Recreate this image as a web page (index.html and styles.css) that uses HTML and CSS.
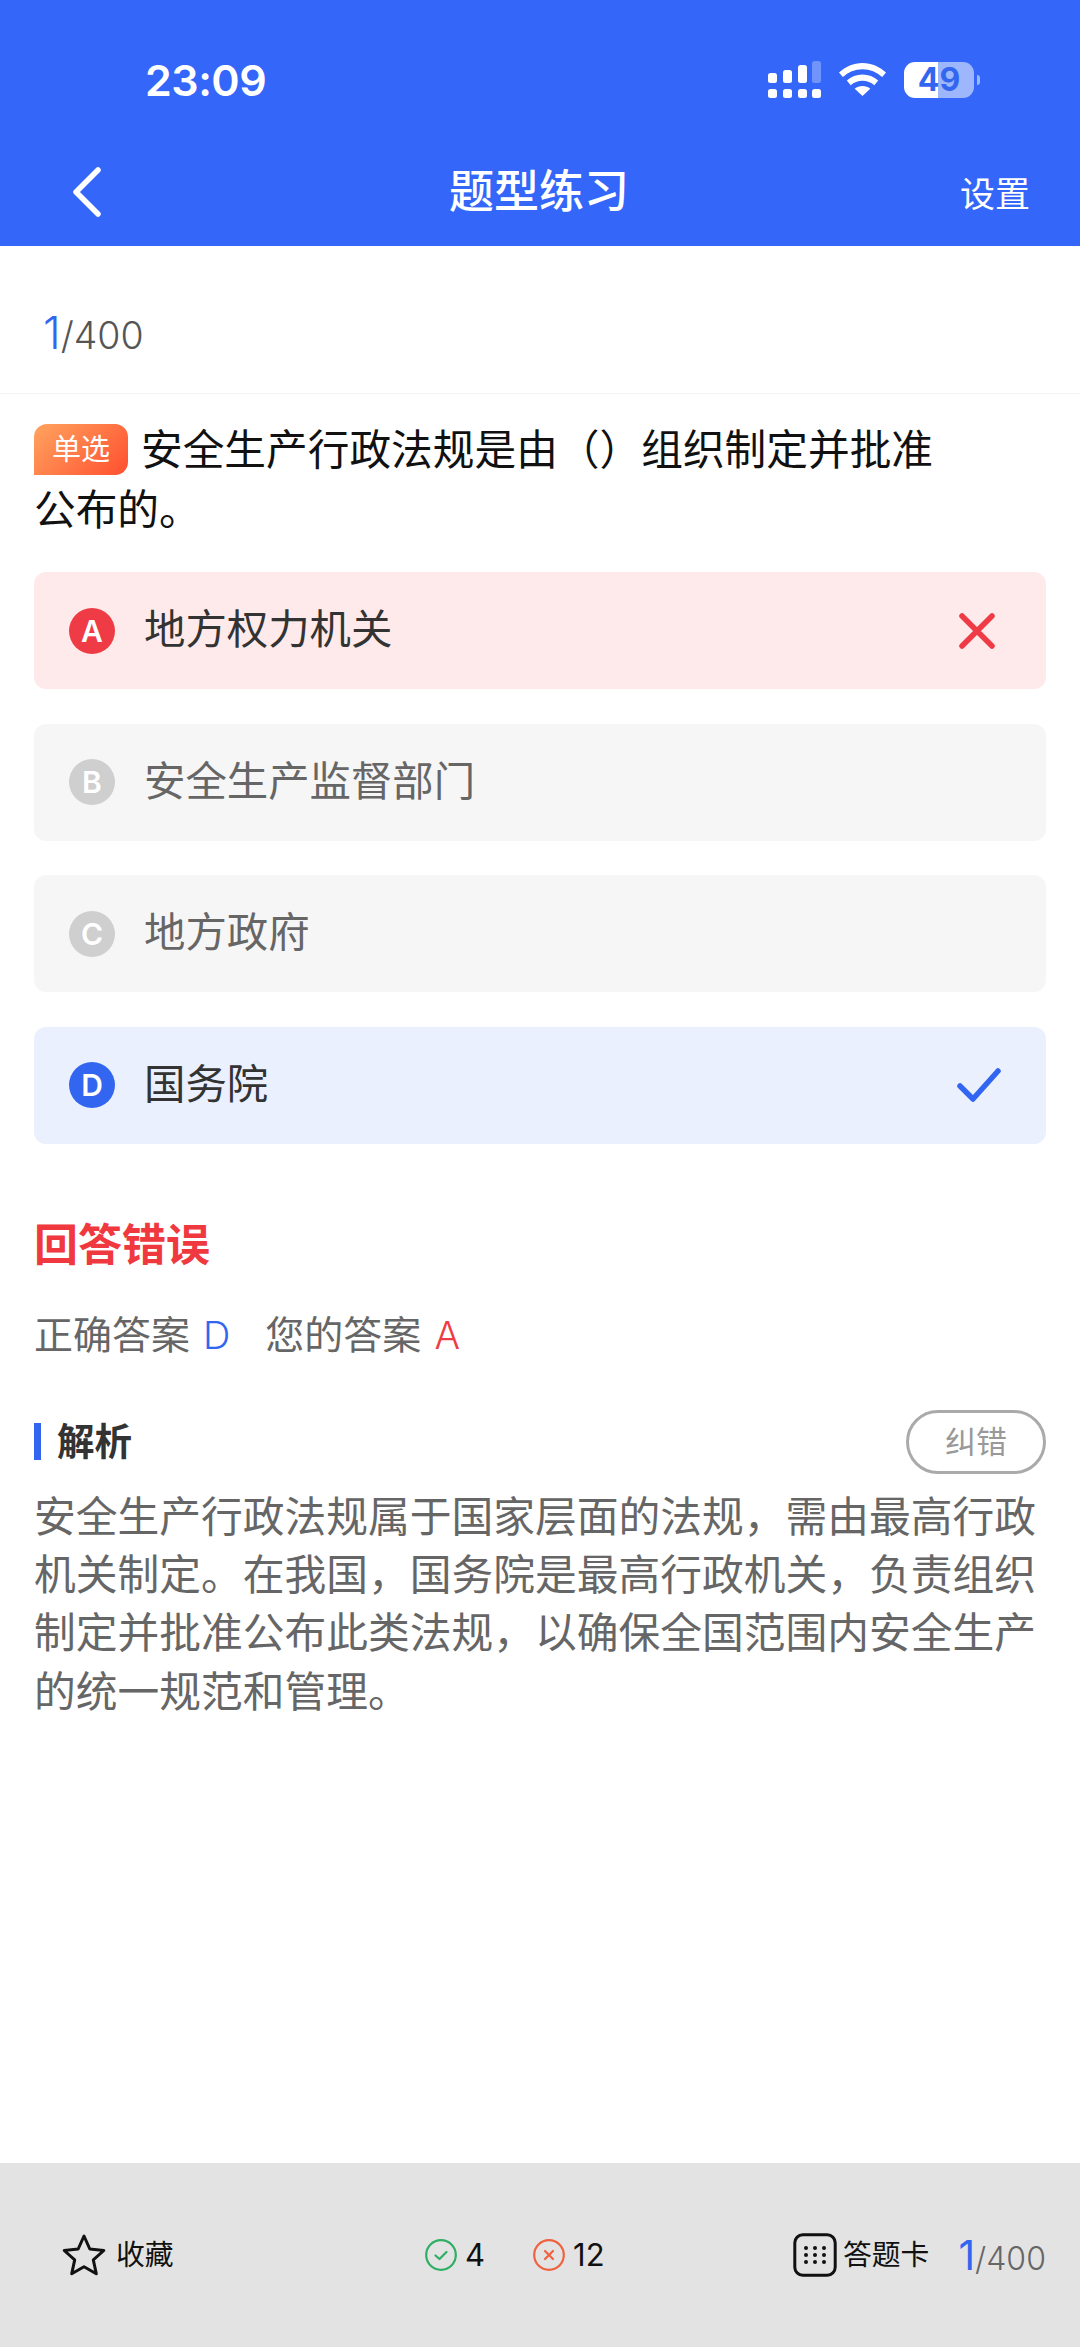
FILE: index.html
```html
<!DOCTYPE html>
<html lang="zh-CN">
<head>
<meta charset="utf-8">
<title>题型练习</title>
<link rel="stylesheet" href="styles.css">
</head>
<body>
<div class="page">
  <header class="header">
    <div class="status">
      <span class="time">23:09</span>
      <div class="status-icons">
        <svg class="signal" width="53" height="37" viewBox="0 0 53 37" fill="#fff">
          <rect x="0" y="28" width="9" height="9" rx="2.5"/><rect x="15" y="28" width="9" height="9" rx="2.5"/><rect x="30" y="28" width="9" height="9" rx="2.5"/><rect x="44" y="28" width="9" height="9" rx="2.5"/>
          <rect x="0" y="12" width="9" height="10" rx="2.5"/><rect x="15" y="9" width="9" height="13" rx="2.5"/><rect x="30" y="4" width="9" height="18" rx="2.5"/><rect x="44" y="0" width="9" height="22" rx="2.5" fill-opacity=".3"/>
        </svg>
        <svg class="wifi" width="47" height="33" viewBox="0 0 47 33" fill="#fff">
          <path d="M23.5 0C14.5 0 6.5 3.6 0 9.5l3.8 4.6C9.2 9.2 16 6.2 23.5 6.2s14.3 3 19.7 7.9L47 9.5C40.500 3.600 32.500 0 23.500 0z"/>
          <path d="M23.500 11.500c-6 0-11.400 2.300-15.700 6.100l3.900 4.700c3.200-2.800 7.300-4.500 11.800-4.500s8.600 1.700 11.800 4.500l3.900-4.700c-4.300-3.800-9.700-6.100-15.700-6.100z"/>
          <path d="M23.500 23c-3 0-5.700 1-7.800 2.800l7.800 7.200 7.800-7.200C29.200 24 26.500 23 23.500 23z"/>
        </svg>
        <div class="battery"><span class="battery-num">49</span></div>
        <span class="battery-nub"></span>
      </div>
    </div>
    <nav class="nav">
      <svg class="back" width="30" height="50" viewBox="0 0 30 50" fill="none" stroke="#fff" stroke-width="5.500" stroke-linecap="round" stroke-linejoin="round">
        <path d="M26 3 4 25l22 22"/>
      </svg>
      <h1 class="title">题型练习</h1>
      <span class="settings">设置</span>
    </nav>
  </header>

  <main class="main">
    <div class="progress"><span class="cur">1</span><span class="total">/400</span></div>

    <section class="content">
      <p class="question"><span class="tag">单选</span>安全生产行政法规是由（）组织制定并批准<br>公布的。</p>

      <div class="options">
        <div class="option wrong">
          <span class="letter">A</span><span class="opt-text">地方权力机关</span>
          <svg class="mark" width="36" height="36" viewBox="0 0 36 36" fill="none" stroke="#EE3B45" stroke-width="5.500" stroke-linecap="round"><path d="M3 3l30 30M33 3 3 33"/></svg>
        </div>
        <div class="option muted"><span class="letter">B</span><span class="opt-text">安全生产监督部门</span></div>
        <div class="option muted"><span class="letter">C</span><span class="opt-text">地方政府</span></div>
        <div class="option right">
          <span class="letter">D</span><span class="opt-text">国务院</span>
          <svg class="mark" width="44" height="36" viewBox="0 0 44 36" fill="none" stroke="#3366F0" stroke-width="5.500" stroke-linecap="round" stroke-linejoin="round"><path d="M3 19l13 13L41 4"/></svg>
        </div>
      </div>

      <h2 class="result">回答错误</h2>
      <p class="answers">正确答案<span class="ans blue">D</span><span class="yours">您的答案</span><span class="ans red">A</span></p>

      <div class="analysis-head">
        <h3 class="analysis-title">解析</h3>
        <span class="report">纠错</span>
      </div>
      <p class="analysis">安全生产行政法规属于国家层面的法规，需由最高行政机关制定。在我国，国务院是最高行政机关，负责组织制定并批准公布此类法规，以确保全国范围内安全生产的统一规范和管理。</p>
    </section>
  </main>

  <footer class="bar">
    <div class="group fav">
      <svg width="44" height="44" viewBox="0 0 44 44" fill="none" stroke="#111" stroke-width="3" stroke-linejoin="round"><path d="M22 3l5.800 13 14 1.500-10.500 9.400 3 13.900L22 33.700 9.700 40.800l3-13.900L2.200 17.500l14-1.500z"/></svg>
      <span class="bar-text">收藏</span>
    </div>
    <div class="group stats">
      <svg width="32" height="32" viewBox="0 0 32 32" fill="none" stroke="#2FAE64" stroke-width="2.200" stroke-linecap="round" stroke-linejoin="round"><circle cx="16" cy="16" r="14.800"/><path d="M10.500 16.500l4 3.500 7-7"/></svg>
      <span class="num">4</span>
      <svg class="stat-x" width="32" height="32" viewBox="0 0 32 32" fill="none" stroke="#F0623F" stroke-width="2.200" stroke-linecap="round"><circle cx="16" cy="16" r="14.800"/><path d="M12 12l8 8M20 12l-8 8"/></svg>
      <span class="num">12</span>
    </div>
    <div class="group card">
      <svg width="44" height="44" viewBox="0 0 44 44" fill="none"><rect x="1.800" y="1.800" width="40.400" height="40.400" rx="8" stroke="#111" stroke-width="3"/><g fill="#111"><circle cx="13" cy="15" r="2"/><circle cx="22" cy="15" r="2"/><circle cx="31" cy="15" r="2"/><circle cx="13" cy="22" r="2"/><circle cx="22" cy="22" r="2"/><circle cx="31" cy="22" r="2"/><circle cx="13" cy="29" r="2"/><circle cx="22" cy="29" r="2"/><circle cx="31" cy="29" r="2"/></g></svg>
      <span class="bar-text">答题卡</span>
      <span class="bar-progress"><span class="bar-cur">1</span><span class="bar-total">/400</span></span>
    </div>
  </footer>
</div>
</body>
</html>
```
FILE: styles.css
```css
* { box-sizing: border-box; }
html, body { margin: 0; padding: 0; }
body {
  font-family: Inter, "Noto Sans CJK SC", sans-serif;
  background: #fff;
  color: #111;
}
h1, h2, h3, p { margin: 0; }
svg { flex: none; }
.page { width: 1080px; height: 2347px; display: flex; flex-direction: column; }

.header { height: 246px; background: #3366F9; color: #fff; flex: none; }
.status { height: 120px; padding: 40px 100px 0 145px; display: flex; align-items: center; justify-content: space-between; }
.time { font-size: 43px; font-weight: 600; line-height: 80px; letter-spacing: -.5px; }
.status-icons { display: flex; align-items: center; }
.signal { margin-top: -2px; }
.wifi { margin-left: 18px; margin-top: -2px; }
.battery {
  width: 70px; height: 36px; margin-left: 18px; border-radius: 11px;
  background: linear-gradient(90deg, #fff 0 34px, #9DB6FC 34px 100%);
  display: flex; align-items: center; justify-content: center;
}
.battery-num { font-size: 32px; font-weight: 700; color: #3366F0; line-height: 36px; }
.battery-nub { width: 3px; height: 10px; margin-left: 3px; border-radius: 0 3px 3px 0; background: #9DB6FC; }

.nav { height: 126px; padding: 17px 50px 0 72px; display: flex; align-items: center; justify-content: space-between; }
.title { flex: 1; text-align: center; font-size: 45px; font-weight: 500; line-height: 60px; margin-right: -16px; }
.settings { font-size: 35px; line-height: 48px; width: 70px; margin-top: 4px; }

.main { flex: 1; }
.progress { height: 148px; padding: 26px 0 0 43px; display: flex; align-items: baseline; border-bottom: 1px solid #F3F3F3; line-height: 121px; }
.cur { font-size: 45px; font-weight: 300; color: #3366F0; }
.total { font-size: 37.500px; font-weight: 300; color: #555; }

.content { padding: 26px 34px 0; }
.question { font-size: 41.700px; line-height: 60px; color: #111; height: 120px; }
.tag {
  display: inline-block; width: 94px; height: 51px; margin-right: 13px; vertical-align: 5px;
  border-radius: 13px 13px 13px 0;
  background: linear-gradient(135deg, #FFA45F, #FF4F2F);
  color: #fff; font-size: 29px; line-height: 51px; text-align: center;
}

.options { margin-top: 32px; display: flex; flex-direction: column; gap: 34.600px; }
.option { height: 117px; border-radius: 12px; padding: 0 35px; display: flex; align-items: center; font-size: 41.400px; }
.letter { width: 46px; height: 46px; border-radius: 50%; color: #fff; font-size: 30px; font-weight: 600; line-height: 46px; text-align: center; flex: none; }
.opt-text { margin-left: 29px; flex: 1; line-height: 60px; margin-top: -3px; }
.wrong { background: #FEEAEA; color: #333; padding-right: 51px; }
.wrong .letter { background: #EE3B45; }
.muted { background: #F6F6F6; color: #666; }
.muted .letter { background: #CFCFCF; }
.right { background: #EAF0FD; color: #333; padding-right: 45px; }
.right .letter { background: #3366F0; }

.result { margin-top: 71px; font-size: 44px; font-weight: 700; line-height: 60px; color: #F0393F; }
.answers { margin-top: 35px; font-size: 39px; line-height: 50px; color: #666; }
.ans { font-size: 38px; font-weight: 300; margin-left: 13px; }
.blue { color: #3366F0; }
.red { color: #EE3B45; }
.yours { margin-left: 35px; }

.analysis-head { margin-top: 50px; height: 64px; display: flex; align-items: center; justify-content: space-between; }
.analysis-title { border-left: 7px solid #3366F0; padding-left: 16px; font-size: 37.500px; font-weight: 700; line-height: 37px; color: #333; }
.report { width: 140px; height: 64px; border: 3px solid #AAA; border-radius: 32px; color: #999; font-size: 31px; line-height: 58px; text-align: center; }
.analysis { margin-top: 14px; font-size: 41.750px; line-height: 58.300px; color: #666; }

.bar { height: 184px; background: #E3E3E3; flex: none; padding: 0 34px 0 62px; display: flex; align-items: center; }
.group { display: flex; align-items: center; }
.fav { width: 112px; }
.bar-text { font-size: 28.800px; line-height: 44px; color: #111; margin-left: 10px; white-space: nowrap; }
.stats { margin-left: 251px; width: 178px; }
.num { font-size: 31px; line-height: 44px; margin-left: 8px; color: #111; }
.stat-x { margin-left: 48px; }
.card { margin-left: 190px; }
.card .bar-text { margin-left: 6px; }
.bar-progress { margin-left: 29px; display: flex; align-items: baseline; line-height: 50px; margin-top: 3px; }
.bar-cur { font-size: 41px; font-weight: 400; color: #3366F0; }
.bar-total { font-size: 32px; font-weight: 300; color: #666; }
```
